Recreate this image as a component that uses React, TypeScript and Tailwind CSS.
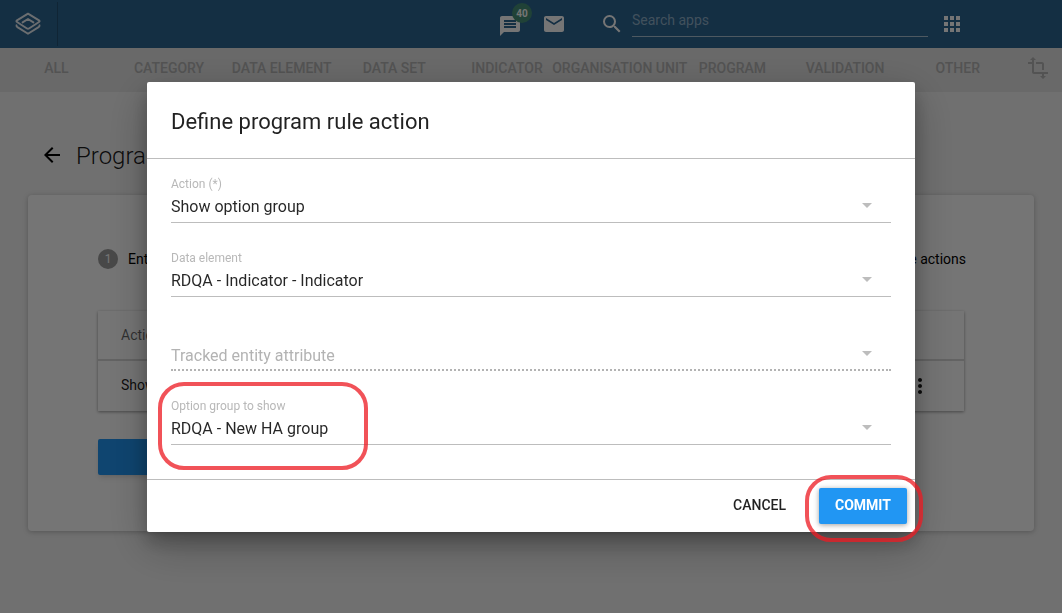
import React from "react";
import {
  MdApps,
  MdArrowBack,
  MdArrowDropDown,
  MdEmail,
  MdMessage,
  MdMoreVert,
  MdSearch,
  MdTransform,
} from "react-icons/md";

const sections = [
  "ALL",
  "CATEGORY",
  "DATA ELEMENT",
  "DATA SET",
  "INDICATOR",
  "ORGANISATION UNIT",
  "PROGRAM",
  "VALIDATION",
  "OTHER",
];

function Logo() {
  return (
    <svg className="h-6 w-7 text-white/90" viewBox="0 0 28 24" fill="none" stroke="currentColor" strokeWidth="1.9" strokeLinejoin="round" strokeLinecap="round">
      <path d="M14 1.6 L25 8.4 Q26.2 9.2 25 10 L15 16.5 Q14 17.1 13 16.5 L3 10 Q1.8 9.2 3 8.4 Z" />
      <path d="M8.6 10.4 L14 7 L19.4 10.4" />
      <path d="M2.5 13.3 Q2.2 14.3 3.4 15.1 L14 21.8 L24.6 15.1 Q25.8 14.3 25.5 13.3" />
    </svg>
  );
}

function HeaderBar() {
  return (
    <header className="flex h-12 items-center bg-[#2c6693] pr-[98px] text-white">
      <a href="#home" aria-label="Home" className="flex h-11 items-center border-r border-black/20 pr-[15px] pl-[14px]">
        <Logo />
      </a>
      <div className="ml-auto flex items-center">
        <a href="#interpretations" aria-label="Interpretations" className="relative mr-5 pt-1">
          <MdMessage className="size-6" />
          <span className="absolute -top-[7px] left-[14px] flex size-5 items-center justify-center rounded-full bg-[#469178] text-[10px] font-bold">
            40
          </span>
        </a>
        <a href="#messages" aria-label="Messages" className="mr-[34px]">
          <MdEmail className="size-6" />
        </a>
        <label htmlFor="search" className="mr-2" aria-label="Search apps">
          <MdSearch className="size-6" />
        </label>
        <input
          id="search"
          placeholder="Search apps"
          className="mr-3 h-[26px] w-[296px] border-b border-white/60 bg-transparent pb-[7px] text-sm leading-[18px] outline-none placeholder:text-[#8fb0c9]"
        />
        <button type="button" aria-label="Apps">
          <MdApps className="size-6" />
        </button>
      </div>
    </header>
  );
}

function SectionTabs() {
  return (
    <nav className="flex h-11 items-center bg-[#e4e4e4] pb-1 text-sm text-[#b5b5b5]">
      {sections.map((name) => (
        <a key={name} href="#section" className="flex min-w-0 flex-1 basis-0 justify-center font-medium whitespace-nowrap">
          {name}
        </a>
      ))}
      <button type="button" aria-label="Toggle layout" className="flex w-12 justify-center">
        <MdTransform className="size-6" />
      </button>
    </nav>
  );
}

function RuleEditor() {
  return (
    <main className="px-7 pt-[47px]">
      <div className="flex h-8 items-center gap-3 pl-3">
        <button type="button" aria-label="Back">
          <MdArrowBack className="size-6" />
        </button>
        <h1 className="pt-0.5 text-2xl font-light text-black/90">Program rule</h1>
      </div>
      <section className="mt-6 rounded-sm bg-white px-[70px] pt-[54px] pb-14 shadow-[0_1px_6px_rgba(0,0,0,0.12),0_1px_4px_rgba(0,0,0,0.12)]">
        <ol className="-mr-0.5 flex items-center justify-between text-sm leading-5">
          <li className="flex items-center gap-[10px]">
            <span className="flex size-5 items-center justify-center rounded-full bg-[#9e9e9e] text-xs text-white">1</span>
            Enter program rule details
          </li>
          <li>Define program rule actions</li>
        </ol>
        <table className="mt-[42px] w-full text-left text-sm shadow-[0_1px_3px_rgba(0,0,0,0.4)]">
          <thead>
            <tr className="h-[49px] border-b-2 border-[#d8d8d8] text-black/60">
              <th className="pl-[23px] font-normal">Action</th>
              <th className="w-14" aria-label="Menu" />
            </tr>
          </thead>
          <tbody>
            <tr className="h-[51px] text-black/90">
              <td className="pb-0.5 pl-[23px]">Show option group</td>
              <td>
                <button type="button" aria-label="Row actions" className="flex">
                  <MdMoreVert className="size-6" />
                </button>
              </td>
            </tr>
          </tbody>
        </table>
        <button type="button" className="mt-7 h-9 w-40 rounded-xs bg-[#2196f3] text-sm font-medium text-white shadow-md">
          ADD
        </button>
      </section>
    </main>
  );
}

type FieldProps = {
  id: string;
  label: string;
  value?: string;
  children?: React.ReactNode;
};

function Field({ id, label, value, children }: FieldProps) {
  return (
    <div className="relative">
      <label htmlFor={id} aria-label={label} className="block h-[18px] text-xs leading-4 text-[#b8b8b8]">
        {value ? label : null}
      </label>
      <div className={value ? "relative border-b border-[#bdbdbd] pb-1" : "relative border-b-2 border-dotted border-[#b3b3b3] pb-[3px]"}>
        <select
          id={id}
          className={
            value
              ? "block h-6 w-full appearance-none bg-transparent pt-px pr-12 text-base leading-[22px] text-black/85 outline-none"
              : "block h-6 w-full appearance-none bg-transparent pt-[3px] pr-12 text-base leading-[22px] text-[#b3b3b3] outline-none"
          }
        >
          <option>{value ?? label}</option>
        </select>
        <MdArrowDropDown className="pointer-events-none absolute -top-px right-3 size-6 text-[#bdbdbd]" />
      </div>
      {children}
    </div>
  );
}

function ActionDialog() {
  return (
    <div className="fixed inset-0 flex items-center justify-center bg-black/54 pt-px">
      <div
        role="dialog"
        aria-labelledby="dialog-title"
        className="w-3/4 max-w-3xl min-w-[768px] rounded-xs bg-white shadow-[0_14px_45px_rgba(0,0,0,0.25),0_10px_18px_rgba(0,0,0,0.22)]"
      >
        <h2 id="dialog-title" className="border-b border-[#bdbdbd] px-6 pt-6 pb-5 text-[22px] leading-8 text-black/87">
          Define program rule action
        </h2>
        <form className="flex flex-col gap-[27px] px-6 pt-[17px] pb-[34px]">
          <Field id="action" label="Action (*)" value="Show option group" />
          <Field id="data-element" label="Data element" value="RDQA - Indicator - Indicator" />
          <Field id="attribute" label="Tracked entity attribute" />
          <Field id="option-group" label="Option group to show" value="RDQA - New HA group">
            <span className="pointer-events-none absolute -top-4 -left-[13px] h-[88px] w-[210px] rounded-[26px] border-4 border-[#ed1c24]/76" />
          </Field>
        </form>
        <footer className="flex justify-end gap-[17px] border-t border-[#bdbdbd] p-2 text-sm">
          <button type="button" className="h-9 px-4 pb-0.5 font-medium text-black/87">
            CANCEL
          </button>
          <div className="relative">
            <button type="button" className="h-9 w-[88px] rounded-xs bg-[#2196f3] pb-0.5 font-bold text-white shadow-[0_1px_6px_rgba(0,0,0,0.2),0_1px_4px_rgba(0,0,0,0.2)]">
              COMMIT
            </button>
            <span className="pointer-events-none absolute -top-[13px] -right-4 -bottom-[18px] -left-[14px] rounded-[26px] border-4 border-[#ed1c24]/76" />
          </div>
        </footer>
      </div>
    </div>
  );
}

export default function App() {
  return (
    <div className="min-h-screen bg-[#f3f3f3] font-[Roboto,sans-serif]">
      <HeaderBar />
      <SectionTabs />
      <RuleEditor />
      <ActionDialog />
    </div>
  );
}
